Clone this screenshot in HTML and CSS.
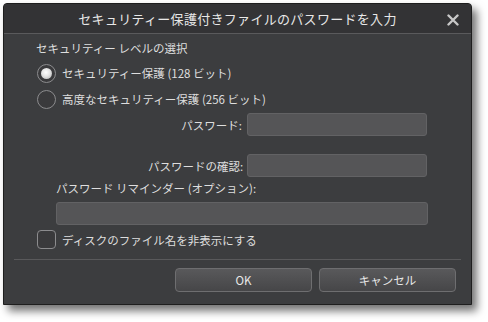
FILE: index.html
```html
<!DOCTYPE html>
<html>
<head>
  <meta charset="UTF-8">
  <title>パスワードを入力</title>
  <link rel="stylesheet" href="styles.css">
</head>
<body>
  <div class="dialog">
    <div class="titlebar">
      <span class="title">セキュリティー保護付きファイルのパスワードを入力</span>
      <span class="close">
        <svg width="12" height="12" viewBox="0 0 12 12"><path d="M1.5 1.5 L10.5 10.5 M10.5 1.5 L1.5 10.5" stroke="#c8c8c8" stroke-width="2.4" stroke-linecap="round"/></svg>
      </span>
    </div>

    <div class="content">
      <div class="group-label">セキュリティー レベルの選択</div>

      <label class="radio-row">
        <span class="radio checked"></span>
        <span>セキュリティー保護 (128 ビット)</span>
      </label>
      <label class="radio-row">
        <span class="radio"></span>
        <span>高度なセキュリティー保護 (256 ビット)</span>
      </label>

      <div class="field-row first">
        <span class="field-label">パスワード:</span>
        <span class="input"></span>
      </div>
      <div class="field-row second">
        <span class="field-label">パスワードの確認:</span>
        <span class="input"></span>
      </div>

      <div class="hint-label">パスワード リマインダー (オプション):</div>
      <span class="input wide"></span>

      <label class="check-row">
        <span class="checkbox"></span>
        <span>ディスクのファイル名を非表示にする</span>
      </label>
    </div>

    <div class="footer">
      <button class="btn">OK</button>
      <button class="btn">キャンセル</button>
    </div>
  </div>
</body>
</html>
```

FILE: styles.css
```css
* {
  box-sizing: border-box;
  margin: 0;
  padding: 0;
}

body {
  width: 488px;
  height: 322px;
  background: #ffffff;
  font-family: 'Noto Sans CJK JP', 'Noto Sans', sans-serif;
  font-size: 11.5px;
  color: #dedede;
  padding: 3px 0 0 3px;
  overflow: hidden;
  white-space: nowrap;
}

.dialog {
  width: 469px;
  height: 302px;
  background: #3c3d3f;
  border: 1px solid #1e1e1e;
  border-radius: 4px 4px 0 0;
  box-shadow: 5px 6px 8px rgba(0, 0, 0, 0.55);
  display: flex;
  flex-direction: column;
}

.titlebar {
  height: 30px;
  background: #333335;
  border-bottom: 1px solid #5a5a5c;
  border-radius: 3px 3px 0 0;
  display: flex;
  align-items: center;
  justify-content: center;
  position: relative;
}

.title {
  font-size: 13px;
  color: #e8e8e8;
  letter-spacing: 0.3px;
}

.close {
  position: absolute;
  right: 12px;
  top: 10px;
  display: flex;
}

.content {
  flex: 1;
  padding: 5px 0 0 32px;
  display: flex;
  flex-direction: column;
}

.group-label {
  height: 18px;
  line-height: 18px;
}

.radio-row {
  display: flex;
  align-items: center;
  gap: 6px;
  height: 26px;
  padding-left: 1px;
}

.radio-row:first-of-type {
  margin-top: 3px;
}

.radio {
  width: 19px;
  height: 19px;
  border-radius: 50%;
  border: 1.5px solid #8c8c8e;
  background: #3a3a3c;
  display: flex;
  align-items: center;
  justify-content: center;
}

.radio.checked::after {
  content: '';
  width: 11px;
  height: 11px;
  border-radius: 50%;
  background: radial-gradient(circle at 45% 40%, #ffffff 0%, #e4e4e4 45%, #a8a8a8 100%);
}

.field-row {
  display: flex;
  align-items: center;
  gap: 5px;
  padding-left: 112px;
}

.field-row.first {
  margin-top: 1px;
}

.field-row.second {
  margin-top: 18px;
}

.field-label {
  width: 94px;
  text-align: right;
}

.input {
  display: block;
  width: 180px;
  height: 23px;
  background: #555557;
  border: 1px solid #626264;
  border-radius: 3px;
}

.hint-label {
  margin: 2px 0 0 20px;
  height: 18px;
  line-height: 18px;
}

.input.wide {
  margin: 5px 0 0 20px;
  width: 372px;
}

.check-row {
  display: flex;
  align-items: center;
  gap: 6px;
  margin-top: 5px;
  padding-left: 1px;
}

.checkbox {
  width: 19px;
  height: 19px;
  border: 1.5px solid #8c8c8e;
  border-radius: 4px;
  background: #3a3a3c;
}

.footer {
  margin: 0 10px 0 10px;
  border-top: 1px solid #59595b;
  height: 45px;
  display: flex;
  justify-content: flex-end;
  align-items: flex-start;
  gap: 7px;
  padding: 8px 5px 0 0;
}

.btn {
  width: 137px;
  height: 24px;
  border: 1px solid #6e6e70;
  border-radius: 4px;
  background: linear-gradient(#59595b, #464648);
  color: #e8e8e8;
  font-family: 'Noto Sans CJK JP', 'Noto Sans', sans-serif;
  font-size: 11.5px;
}
```
